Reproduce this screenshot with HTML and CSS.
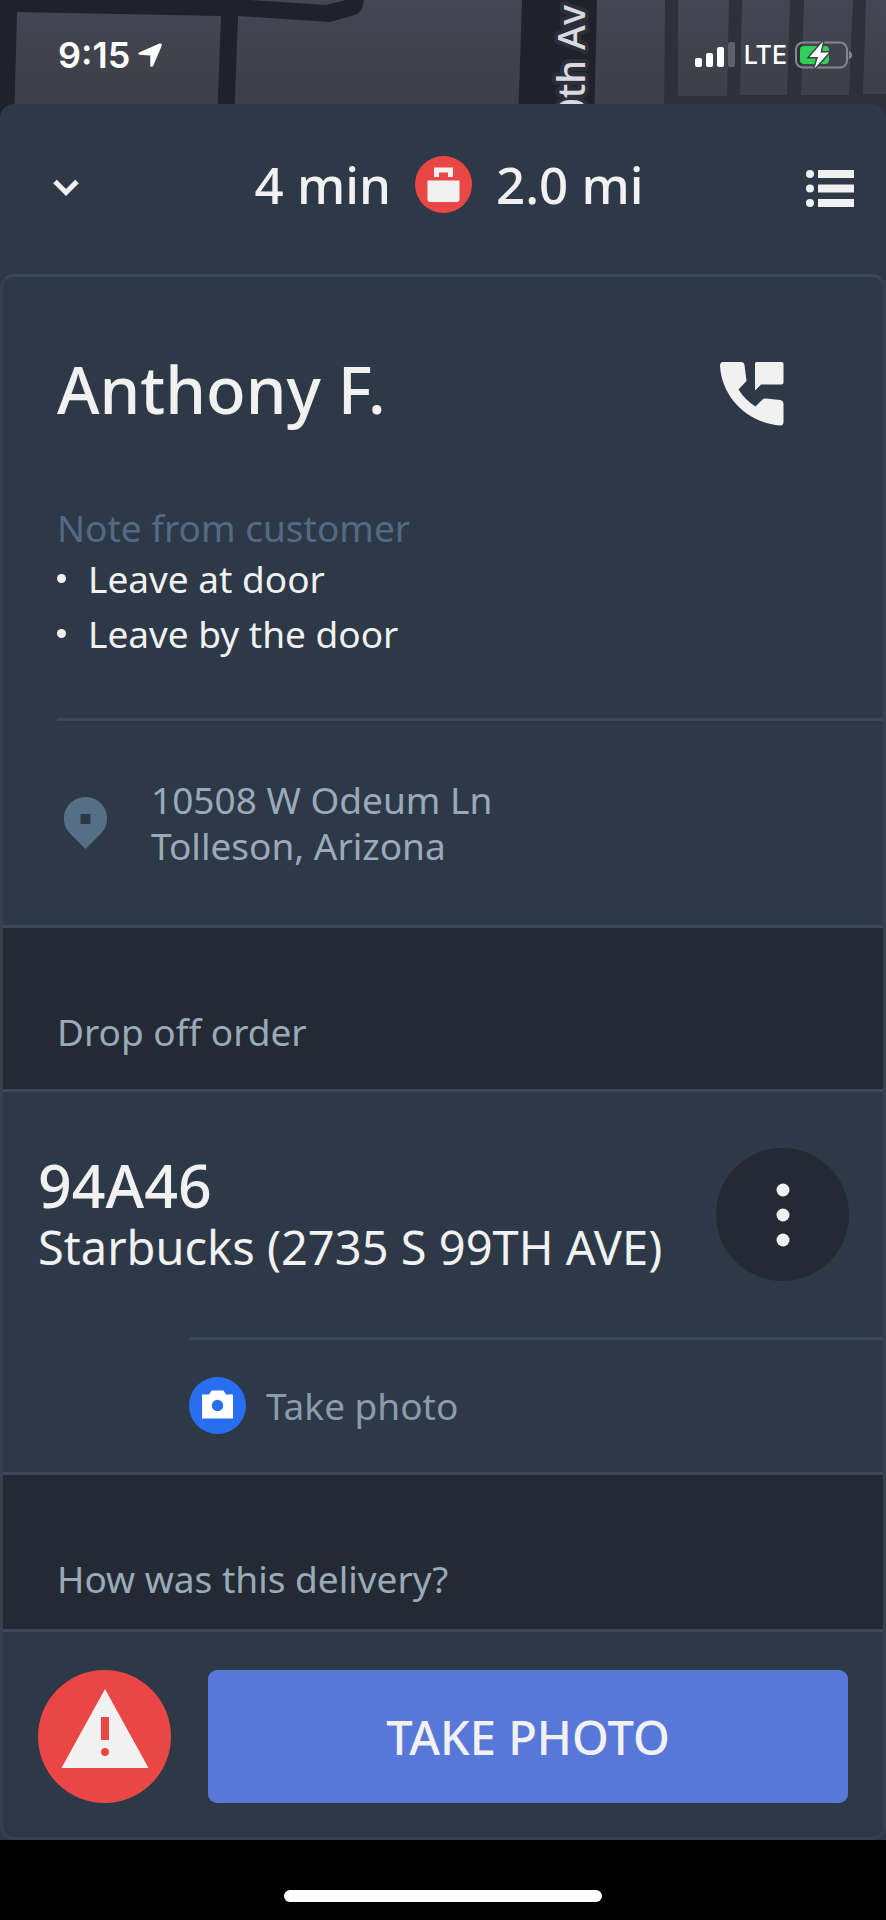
FILE: index.html
```html
<!DOCTYPE html>
<html lang="en">
<head>
<meta charset="utf-8">
<meta name="viewport" content="width=device-width, initial-scale=1">
<title>Delivery details</title>
<link rel="stylesheet" href="styles.css">
</head>
<body>
<div class="app">
  <div class="top">
    <svg class="map" viewBox="0 0 886 124" preserveAspectRatio="xMidYMin slice" aria-hidden="true">
      <defs>
        <linearGradient id="land" x1="0" y1="0" x2="0" y2="1">
          <stop offset="0" stop-color="#444751"/>
          <stop offset="1" stop-color="#3b3e47"/>
        </linearGradient>
      </defs>
      <rect width="886" height="124" fill="url(#land)"/>
      <path d="M0 0H250L326 5L346 0H364Q362 13 355 15L330 22L238 16L234 124H217L221 16L17 12L14 124H0Z" fill="#1f222b"/>
      <path d="M522 0H597L594 124H518Z" fill="#1f222b"/>
      <path d="M665 0H678V96H727L729 0H742L740 95H787L790 0H804L801 95H849L853 0H866L863 94H886V124H664Z" fill="#2e313a"/>
      <text class="map-label" transform="translate(585 120) rotate(-90)">0th Av</text>
    </svg>
    <div class="status">
      <div class="status-group">
        <span class="clock">9:15</span>
        <svg width="24" height="24" viewBox="0 0 24 24" aria-hidden="true"><path d="M23.600 3L15.500 22.300Q14.500 24.500 12.300 23.500V12.500L1.500 11.800Q-1 10.500 1.600 9.200L21.500.6Q24.500-.3 23.600 3Z" fill="#fff"/></svg>
      </div>
      <div class="status-group">
        <svg width="41" height="26" viewBox="0 0 41 26" aria-hidden="true">
          <rect x="0" y="16" width="7" height="9" rx="2" fill="#fff"/>
          <rect x="11" y="11" width="7" height="14" rx="2" fill="#fff"/>
          <rect x="22" y="5" width="7" height="20" rx="2" fill="#fff"/>
          <rect x="33" y="0" width="7" height="25" rx="2" fill="#5d6068"/>
        </svg>
        <span class="network">LTE</span>
        <svg width="58" height="28" viewBox="0 0 58 28" aria-hidden="true">
          <rect x="1" y="1.500" width="51" height="25" rx="7" fill="none" stroke="#85878e" stroke-width="2"/>
          <path d="M54 10Q57 11 57 14Q57 17 54 18Z" fill="#85878e"/>
          <rect x="5" y="5" width="29" height="18" rx="4" fill="#30d158"/>
          <path d="M28 .5L14.500 16H23L19.500 27.500L34 11.500H25.500Z" fill="#fff" stroke="#3d4049" stroke-width="3" paint-order="stroke"/>
        </svg>
      </div>
    </div>
  </div>

  <main class="sheet">
    <header class="trip">
      <button class="icon-button trip-button" type="button" aria-label="Collapse">
        <svg width="26" height="18" viewBox="0 0 26 18" aria-hidden="true"><path d="M2 2.500L13 13.500L24 2.500" fill="none" stroke="#f1f1f1" stroke-width="5"/></svg>
      </button>
      <div class="trip-summary">
        <span class="trip-time">4 min</span>
        <svg width="57" height="57" viewBox="0 0 57 57" aria-hidden="true">
          <circle cx="28.500" cy="28.500" r="28.500" fill="#eb4646"/>
          <path d="M19 21V11.500H38V21H33V16.500H24V21Z" fill="#f1f1f1"/>
          <path d="M12.500 24.500H44.500V43Q44.500 46 41.500 46H15.500Q12.500 46 12.500 43Z" fill="#f1f1f1"/>
        </svg>
        <span>2.0 mi</span>
      </div>
      <button class="icon-button trip-button trip-list" type="button" aria-label="Trip list">
        <svg width="48" height="37" viewBox="0 0 48 37" fill="#f1f1f1" aria-hidden="true">
          <circle cx="4" cy="4" r="4"/><circle cx="4" cy="18.500" r="4"/><circle cx="4" cy="33" r="4"/>
          <rect x="12" y="0" width="36" height="8"/><rect x="12" y="14.500" width="36" height="8"/><rect x="12" y="29" width="36" height="8"/>
        </svg>
      </button>
    </header>

    <div class="card">
      <section class="customer">
        <div class="customer-head">
          <h1 class="name">Anthony F.</h1>
          <button class="icon-button call" type="button" aria-label="Contact customer">
            <svg width="64" height="64" viewBox="0 0 64 64" fill="#f1f1f1" aria-hidden="true">
              <path d="M3 0H21Q24 0 24.500 3L26.500 19L18.500 27.500Q25 38 35.500 44.500L42.500 37.500Q44 36 46 36.500L60 38Q63.500 38.500 63.500 42V60Q63.500 63.500 60 63.500C28 61 2 36 0 4Q0 0 3 0Z"/>
              <path d="M36.500 0H61.500Q63.500 0 63.500 2V20.500Q63.500 22.500 61.500 22.500H41L35 28.500V1.500Q35 0 36.500 0Z"/>
            </svg>
          </button>
        </div>
        <h2 class="note-title">Note from customer</h2>
        <ul class="notes">
          <li>Leave at door</li>
          <li>Leave by the door</li>
        </ul>
      </section>

      <section class="address">
        <svg width="43" height="52" viewBox="0 0 43 52" aria-hidden="true">
          <path fill-rule="evenodd" d="M21.500 0A21.500 21.500 0 0 1 37 36.500L21.500 52L6 36.500A21.500 21.500 0 0 1 21.500 0ZM16.500 17V27H26.500V17Z" fill="#566f89"/>
        </svg>
        <address class="address-text">10508 W Odeum Ln<br>Tolleson, Arizona</address>
      </section>

      <h2 class="section-title">Drop off order</h2>

      <section class="order">
        <div class="order-row">
          <div class="order-text">
            <h3 class="order-code">94A46</h3>
            <p class="order-store">Starbucks (2735 S 99TH AVE)</p>
          </div>
          <button class="round-button more" type="button" aria-label="More options">
            <svg width="14" height="64" viewBox="0 0 14 64" fill="#f1f1f1" aria-hidden="true"><circle cx="7" cy="7" r="6.500"/><circle cx="7" cy="32" r="6.500"/><circle cx="7" cy="57" r="6.500"/></svg>
          </button>
        </div>
        <div class="photo-row">
          <svg width="57" height="57" viewBox="0 0 57 57" aria-hidden="true">
            <circle cx="28.500" cy="28.500" r="28.500" fill="#276ef1"/>
            <path d="M13 17.500H20L22.500 13.500H34.500L37 17.500H44V41.500H13Z" fill="#fff"/>
            <circle cx="28.500" cy="28.500" r="5.700" fill="#276ef1"/>
          </svg>
          <span>Take photo</span>
        </div>
      </section>

      <h2 class="section-title section-title-last">How was this delivery?</h2>

      <footer class="actions">
        <button class="round-button alert" type="button" aria-label="Report an issue">
          <svg width="88" height="80" viewBox="0 0 88 80" aria-hidden="true">
            <path d="M44 0L87.500 79H.5Z" fill="#f1f1f1"/>
            <rect x="40" y="28" width="8" height="23" fill="#eb4646"/>
            <circle cx="44" cy="63" r="4" fill="#eb4646"/>
          </svg>
        </button>
        <button class="primary" type="button">TAKE PHOTO</button>
      </footer>
    </div>
  </main>

  <div class="home-area"><div class="home-indicator"></div></div>
</div>
</body>
</html>
```

FILE: styles.css
```css
* { box-sizing: border-box; }

body {
  margin: 0;
  background: #000;
  color: #f1f1f1;
  font-family: "Noto Sans", "Open Sans", sans-serif;
}

h1, h2, h3, p, ul { margin: 0; padding: 0; font-weight: inherit; }
svg { display: block; flex: none; }
button { border: 0; padding: 0; color: inherit; font-family: inherit; cursor: pointer; }

.app { display: flex; flex-direction: column; min-height: 100vh; }

/* Status bar over the map strip */
.top { position: relative; height: 104px; }
.map { position: absolute; top: 0; left: 0; width: 100%; height: 124px; }
.map-label {
  font-size: 38px;
  font-weight: 500;
  fill: #d9d9df;
  stroke: #2b2f39;
  stroke-width: 8px;
  stroke-linejoin: round;
  paint-order: stroke;
}
.status {
  position: relative;
  display: flex;
  justify-content: space-between;
  align-items: center;
  padding: 33px 33px 0 58px;
  color: #fff;
  font-family: Inter, "Liberation Sans", sans-serif;
  line-height: 44px;
}
.status-group { display: flex; align-items: center; gap: 8px; }
.clock { font-size: 36px; font-weight: 600; }
.network { font-size: 25px; font-weight: 500; }

/* Sheet */
.sheet {
  position: relative;
  flex: 1;
  background: #2e3947;
  border-radius: 14px 14px 0 0;
}
.trip {
  display: grid;
  grid-template-columns: 1fr auto 1fr;
  align-items: center;
  padding: 45px 32px 55px 33px;
}
.trip-summary {
  display: grid;
  grid-template-columns: 1fr auto 1fr;
  align-items: center;
  gap: 24px;
  font-size: 51px;
  font-weight: 500;
  line-height: 70px;
}
.trip-time { text-align: right; }
.icon-button { background: none; }
.trip-button { justify-self: start; padding: 8px 0 0 20px; }
.trip-list { justify-self: end; }
.call { padding-top: 10px; }

.card {
  background: #2e3947;
  border: 3px solid #364150;
  border-top-color: #3a4857;
  border-radius: 14px;
}
.customer { padding: 72px 0 0 54px; }
.customer-head {
  display: flex;
  justify-content: space-between;
  align-items: center;
  padding-right: 99px;
}
.name { font-size: 65px; font-weight: 500; line-height: 80px; }
.note-title {
  margin-top: 76px;
  color: #526a85;
  font-size: 37px;
  line-height: 46px;
}
.notes { padding-bottom: 57px; border-bottom: 3px solid #3a4857; list-style: none; }
.notes li {
  display: flex;
  align-items: center;
  gap: 22px;
  font-size: 37px;
  line-height: 55px;
}
.notes li::before {
  content: "";
  width: 9px;
  height: 9px;
  border-radius: 50%;
  background: #f1f1f1;
}

.address {
  display: flex;
  align-items: center;
  gap: 44px;
  padding: 56px 61px;
}
.address-text {
  color: #9baaba;
  font-size: 37px;
  font-style: normal;
  line-height: 46px;
}

.section-title {
  padding: 81px 54px 34px;
  border-top: 3px solid #3a4857;
  border-bottom: 3px solid #3a4857;
  background: #232a33;
  color: #9baaba;
  font-size: 37px;
  line-height: 46px;
}
.section-title-last { padding-bottom: 27px; }

.order-row {
  display: flex;
  justify-content: space-between;
  align-items: center;
  padding: 56px 34px 56px 35px;
}
.order-code { font-size: 59px; font-weight: 500; line-height: 64px; }
.order-store { font-size: 47px; line-height: 60px; }
.round-button {
  display: flex;
  flex: none;
  align-items: center;
  justify-content: center;
  width: 133px;
  height: 133px;
  border-radius: 50%;
}
.more { background: #232a33; }
.photo-row {
  display: flex;
  align-items: center;
  gap: 20px;
  margin-left: 186px;
  padding: 37px 0 38px;
  border-top: 3px solid #3a4857;
  color: #8c9bac;
  font-size: 37px;
  line-height: 46px;
}

.actions { display: flex; gap: 37px; padding: 38px 35px 34px; }
.alert { padding-bottom: 16px; background: #eb4646; }
.primary {
  flex: 1;
  border-radius: 9px;
  background: #5878d9;
  font-size: 47px;
  font-weight: 500;
}

.home-area { display: flex; justify-content: center; padding: 50px 0 18px; background: #000; }
.home-indicator { width: 36%; height: 12px; border-radius: 6px; background: #fff; }
```
